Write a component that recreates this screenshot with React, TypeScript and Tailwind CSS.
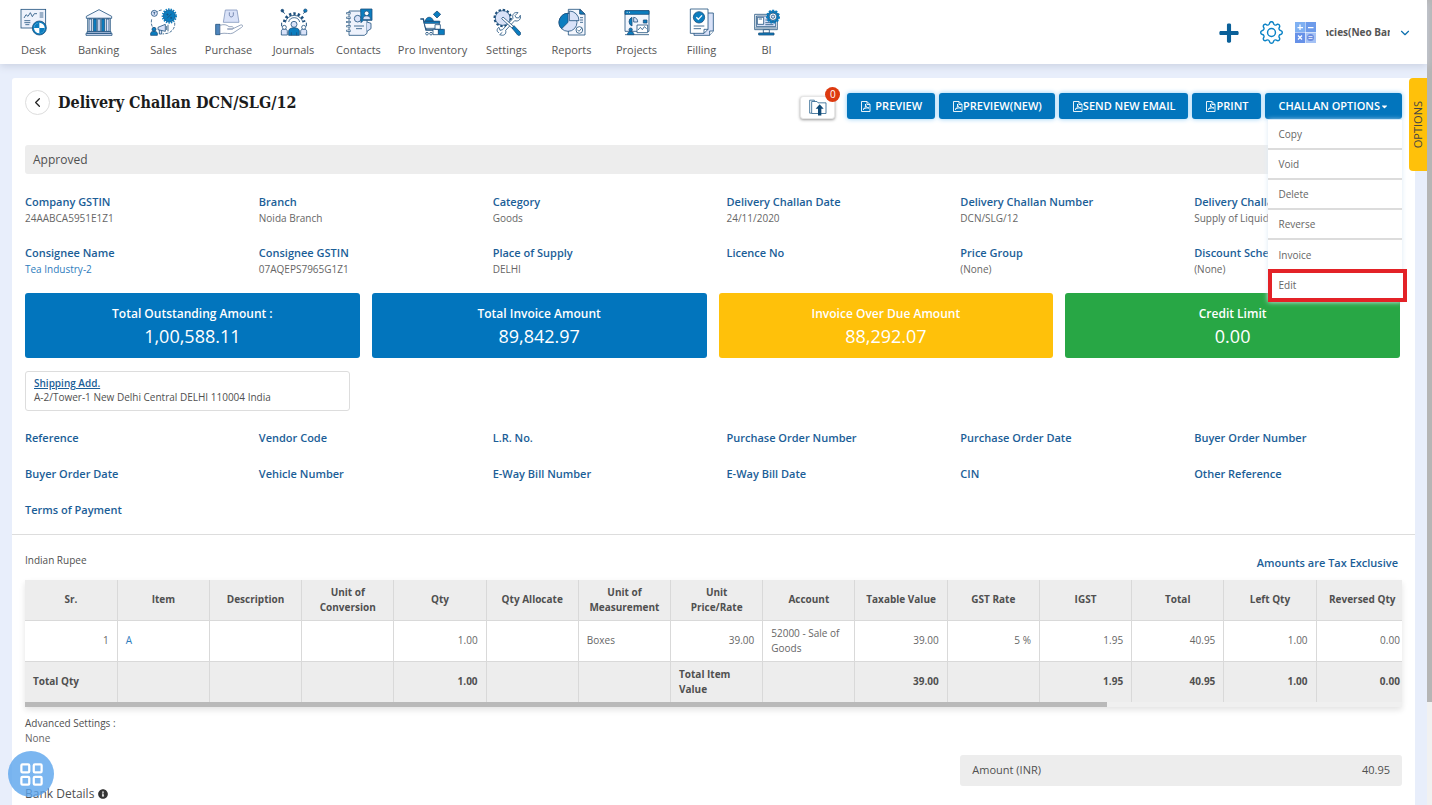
import React from "react";
import { ChevronDown, ChevronLeft, LayoutGrid } from "lucide-react";
import { BsGear } from "react-icons/bs";
import { FaCaretDown, FaInfoCircle, FaPlus } from "react-icons/fa";

const NAVY = "#1d4f7c";
const BLUE = "#0b7dbf";
const PALE = "#d9e2f8";

type NavItem = {
	label: string;
	icon: React.ReactNode;
	wide?: boolean;
};

type Field = {
	label: string;
	value?: string;
	link?: boolean;
};

const navItems: NavItem[] = [
	{
		label: "Desk",
		icon: (
			<>
				<rect x="3" y="4" width="74" height="56" fill="#eef2fc" />
				<path d="M12 30l6-10 6 5 7-11 6 12 6-9h8M59 15h11M59 21h11M59 27h11M13 38h18M13 44h18M16 50h12" fill="none" />
				<circle cx="58" cy="60" r="21" fill={BLUE} />
				<circle cx="58" cy="60" r="16" fill="#fff" stroke="none" />
				<path d="M58 60V44a16 16 0 0 0-16 16zM58 60v16a16 16 0 0 0 16-16z" fill={BLUE} stroke="none" />
			</>
		),
	},
	{
		label: "Banking",
		icon: (
			<>
				<path d="M4 25L42 5l38 20v6H4z" fill="#f3f6fd" />
				<path d="M8 31h68v40H8z" fill="#fff" />
				<path d="M12 33h8v37h-8zM64 33h8v37h-8z" fill={PALE} />
				<path d="M25 33h9v37h-9zM50 33h9v37h-9z" fill={BLUE} />
				<path d="M38 33h8v37h-8z" fill={PALE} />
				<path d="M6 71h72v5H6zM3 76h78v6H3z" fill={PALE} />
			</>
		),
	},
	{
		label: "Sales",
		icon: (
			<>
				<path d="M35 6c-8 1-12 4-16 8M74 44c2 14-7 28-22 32l-14 2M5 34c-2 9-1 16 2 22" fill="none" strokeDasharray="9 4" />
				<circle cx="13" cy="16" r="9" fill={PALE} />
				<path d="M10 13h6M13 13v7" fill="none" />
				<circle cx="58" cy="24" r="18" fill={BLUE} />
				<circle cx="58" cy="24" r="20" fill="none" stroke={BLUE} strokeWidth="6" strokeDasharray="4 3.5" />
				<path d="M51 31l14-14M51 18h3v3h-3zM62 28h3v3h-3z" fill="none" />
				<circle cx="12" cy="64" r="6" fill={BLUE} />
				<path d="M2 82V76c0-8 20-8 20 0v6z" fill={BLUE} />
				<path d="M24 58l22-9v21l-22-5zM28 66v12h7V68M50 54v12M54 50v20" fill={PALE} />
			</>
		),
	},
	{
		label: "Purchase",
		icon: (
			<>
				<path d="M31 6h35l6 37H25z" fill={PALE} stroke="#8195bd" />
				<path d="M43 13v7c0 9 12 9 12 0v-7" fill="none" stroke="#5b6f9c" />
				<path d="M2 49h13v31H2z" fill="#4f86bd" />
				<path d="M15 52c12-4 20-2 27 4h9c6 1 5 7 0 7H37h15l25-12c7-2 8 4 3 7L54 75c-8 5-22-2-39 2z" fill="#fff" stroke="#7e91ae" />
			</>
		),
	},
	{
		label: "Journals",
		icon: (
			<>
				<path d="M13 42a30 30 0 0 1 59 0" fill="none" strokeWidth="9" strokeDasharray="7 6" />
				<path d="M16 44a27 27 0 0 1 53 0" fill="#fff" />
				<path d="M26 42a17 17 0 0 1 33 0" fill="none" />
				<path d="M14 17l-7-8M70 17l6-7M5 55V44M79 55V44" fill="none" strokeWidth="3" />
				<circle cx="7" cy="8" r="4" fill={NAVY} />
				<circle cx="76" cy="8" r="5" fill={BLUE} />
				<path d="M4 81V70c0-10 18-10 18 0v11zM62 81V70c0-10 18-10 18 0v11z" fill={PALE} />
				<circle cx="13" cy="58" r="6" fill="#fff" />
				<circle cx="71" cy="58" r="6" fill="#fff" />
				<path d="M26 82V69c0-13 32-13 32 0v13z" fill={BLUE} />
				<circle cx="42" cy="49" r="9" fill={PALE} />
				<path d="M34 82V73M50 82V73" fill="none" />
			</>
		),
	},
	{
		label: "Contacts",
		icon: (
			<>
				<path d="M12 9h54v67l-8 6H12z" fill="#eef2fc" />
				<path d="M66 42l12 4v16l-12 8" fill={PALE} />
				<path d="M4 16h13M4 29h13M4 42h13M4 55h13M4 68h13" fill="none" strokeWidth="6" />
				<path d="M6 16h10M6 29h10M6 42h10M6 55h10M6 68h10" fill="none" stroke="#fff" />
				<circle cx="38" cy="32" r="10" fill={PALE} />
				<path d="M27 54h30M33 62h18" fill="none" />
				<path d="M47 3h34v34H55l-7 7z" fill={BLUE} />
				<circle cx="65" cy="16" r="7" fill="#fff" />
				<path d="M54 35v-4c0-10 22-10 22 0v4z" fill={PALE} />
			</>
		),
	},
	{
		label: "Pro Inventory",
		wide: true,
		icon: (
			<>
				<path d="M4 33h9l8 33h51" fill="none" strokeWidth="4" />
				<path d="M14 40h49l-6 21H20z" fill="#fff" />
				<path d="M16 40h45v6H17zM19 39c2-14 20-16 24 0z" fill={BLUE} />
				<path d="M54 9l11 10-11 11-11-11z" fill={BLUE} />
				<path d="M48 50h16v14H48zM42 64h16v16H42z" fill="#fff" />
				<path d="M59 64h17v16H59z" fill={BLUE} />
				<circle cx="24" cy="77" r="4" fill="#fff" />
				<circle cx="36" cy="77" r="4" fill="#fff" />
			</>
		),
	},
	{
		label: "Settings",
		icon: (
			<>
				<circle cx="29" cy="30" r="24" fill="none" strokeWidth="7" strokeDasharray="7 5.5" />
				<circle cx="29" cy="30" r="22" fill={PALE} />
				<path d="M18 74c-8-2-7-13 0-16l3 9 8-2 31-34c-4-12 5-20 15-17l-9 9 3 6 8 1 5-8c3 12-6 20-17 16L38 67c3 12-6 18-18 13l8-7" fill="#fff" />
				<path d="M30 27l-4 5 34 31 5-5z" fill="#fff" />
				<path d="M57 60l6-7 19 20c4 6-3 12-8 8z" fill={BLUE} />
			</>
		),
	},
	{
		label: "Reports",
		icon: (
			<>
				<path d="M31 4h36l14 14v63H31z" fill="#f3f6fd" />
				<path d="M67 4v14h14M66 29h9M66 36h9M66 43h9" fill="none" />
				<path d="M65 5l15 13H65z" fill={BLUE} />
				<circle cx="30" cy="43" r="27" fill={PALE} />
				<path d="M30 43V16A27 27 0 0 0 11 62z" fill={BLUE} />
				<path d="M34 38V9a29 29 0 0 1 29 29z" fill={PALE} />
				<circle cx="64" cy="66" r="10" fill="#fff" />
				<path d="M58 65l5 5 8-9" fill="none" />
			</>
		),
	},
	{
		label: "Projects",
		icon: (
			<>
				<path d="M6 8h72v62H6z" fill="#f3f6fd" />
				<path d="M6 8h72v11H6z" fill={BLUE} />
				<path d="M11 13h3M18 13h3" fill="none" stroke="#fff" />
				<path d="M27 28v26a14 14 0 0 1 0-26z" fill={BLUE} />
				<path d="M32 28a14 14 0 0 1 12 14H32z" fill={PALE} />
				<path d="M61 36h11v9H61z" fill={BLUE} />
				<path d="M42 51h32v23H42z" fill="#fff" />
				<path d="M45 66l7-8 6 7 6-9 7 6M6 80h72" fill="none" />
				<circle cx="23" cy="65" r="5" fill={BLUE} />
				<path d="M13 80c1-13 19-13 20 0z" fill={BLUE} />
			</>
		),
	},
	{
		label: "Filling",
		icon: (
			<>
				<path d="M18 15h58v54L65 82H18z" fill={PALE} />
				<path d="M76 69H65v13" fill="#fff" />
				<path d="M7 3h53v61L48 76H7z" fill="#fff" />
				<path d="M60 64H48v12M17 54h32M17 62h22" fill="none" />
				<circle cx="33" cy="28" r="17" fill={BLUE} />
				<path d="M25 28l6 6 11-12" fill="none" stroke="#fff" strokeWidth="4" />
			</>
		),
	},
	{
		label: "BI",
		icon: (
			<>
				<path d="M5 19h68v46H5z" fill="#fff" />
				<path d="M10 24h58v32H10z" fill={PALE} />
				<path d="M13 28h19v21H13zM17 33h10M37 36h9M37 44h24M37 50h24M7 60h64" fill="#fff" />
				<path d="M31 65h18v10H31z" fill="#fff" />
				<path d="M17 75h46v6H17z" fill={BLUE} />
				<circle cx="60" cy="26" r="17" fill={BLUE} />
				<circle cx="60" cy="26" r="18" fill="none" stroke={BLUE} strokeWidth="6" strokeDasharray="6 4" />
				<circle cx="60" cy="26" r="11" fill="#fff" />
				<circle cx="60" cy="26" r="5" fill={PALE} />
			</>
		),
	},
];

const details: Field[] = [
	{ label: "Company GSTIN", value: "24AABCA5951E1Z1" },
	{ label: "Branch", value: "Noida Branch" },
	{ label: "Category", value: "Goods" },
	{ label: "Delivery Challan Date", value: "24/11/2020" },
	{ label: "Delivery Challan Number", value: "DCN/SLG/12" },
	{ label: "Delivery Challan Type", value: "Supply of Liquid Gas" },
	{ label: "Consignee Name", value: "Tea Industry-2", link: true },
	{ label: "Consignee GSTIN", value: "07AQEPS7965G1Z1" },
	{ label: "Place of Supply", value: "DELHI" },
	{ label: "Licence No" },
	{ label: "Price Group", value: "(None)" },
	{ label: "Discount Scheme", value: "(None)" },
];

const references = [
	"Reference",
	"Vendor Code",
	"L.R. No.",
	"Purchase Order Number",
	"Purchase Order Date",
	"Buyer Order Number",
	"Buyer Order Date",
	"Vehicle Number",
	"E-Way Bill Number",
	"E-Way Bill Date",
	"CIN",
	"Other Reference",
	"Terms of Payment",
];

const totals = [
	{ label: "Total Outstanding Amount :", value: "1,00,588.11", color: "bg-[#0275bd]" },
	{ label: "Total Invoice Amount", value: "89,842.97", color: "bg-[#0275bd]" },
	{ label: "Invoice Over Due Amount", value: "88,292.07", color: "bg-[#ffc10a]" },
	{ label: "Credit Limit", value: "0.00", color: "bg-[#28a745]" },
];

const columns = [
	{ head: "Sr.", cell: "1", total: "Total Qty" },
	{ head: "Item", cell: "A", total: "" },
	{ head: "Description", cell: "", total: "" },
	{ head: "Unit of Conversion", cell: "", total: "" },
	{ head: "Qty", cell: "1.00", total: "1.00" },
	{ head: "Qty Allocate", cell: "", total: "" },
	{ head: "Unit of Measurement", cell: "Boxes", total: "" },
	{ head: "Unit Price/Rate", cell: "39.00", total: "Total Item Value" },
	{ head: "Account", cell: "52000 - Sale of Goods", total: "" },
	{ head: "Taxable Value", cell: "39.00", total: "39.00" },
	{ head: "GST Rate", cell: "5 %", total: "" },
	{ head: "IGST", cell: "1.95", total: "1.95" },
	{ head: "Total", cell: "40.95", total: "40.95" },
	{ head: "Left Qty", cell: "1.00", total: "1.00" },
	{ head: "Reversed Qty", cell: "0.00", total: "0.00" },
];

const menuItems = ["Copy", "Void", "Delete", "Reverse", "Invoice"];

// numbers and percentages go to the right, everything else to the left
const isNumeric = (text: string) => /^[\d.]+( %)?$/.test(text);

function PdfIcon() {
	return (
		<svg viewBox="0 0 20 22" className="h-[11px] w-[11px]" fill="none" stroke="currentColor" strokeWidth="1.8">
			<path d="M2 1h11l6 6v14H2zM13 1v6h6" />
			<path d="M5 17c4-2 6-6 5-11M10 6c0 5 3 8 7 8-4-1-8 0-12 3" />
		</svg>
	);
}

function ActionButton({ children }: { children: React.ReactNode }) {
	return (
		<button className="flex h-[26px] items-center whitespace-nowrap rounded-[3px] bg-[#0275bd] px-[13px] text-[11px] font-semibold text-white shadow-[0_0_5px_#8fcbf5]">
			{children}
		</button>
	);
}

function TopNav() {
	return (
		<header className="relative z-10 flex h-16 shrink-0 items-center justify-between bg-white pr-[15px] shadow-[0_2px_8px_#c9d0e0]">
			<nav className="flex h-full pl-px">
				{navItems.map((item) => (
					<a
						key={item.label}
						href="#"
						className={`flex flex-col items-center gap-[6px] whitespace-nowrap pt-[8px] text-[11px] leading-4 text-[#555] ${item.wide ? "w-[83px]" : "w-[65px]"}`}
					>
						<svg viewBox="0 0 84 84" className="size-7" stroke={NAVY} strokeWidth="2.4">
							{item.icon}
						</svg>
						{item.label}
					</a>
				))}
			</nav>
			<div className="flex items-center pt-px">
				<button aria-label="Add" className="mr-5 text-[#0a6099]">
					<FaPlus size={22} />
				</button>
				<button aria-label="Settings" className="mr-3 text-[#0b83c6]">
					<BsGear size={23} />
				</button>
				<button aria-label="Calculator" className="mr-2.5">
					<svg viewBox="0 0 42 42" className="size-[21px]" stroke="#fff" strokeWidth="2.5" fill="none">
						<path d="M0 0h20v20H0z" fill="#7fb0f2" stroke="none" />
						<path d="M21 0h21v20H21z" fill="#6d9bea" stroke="none" />
						<path d="M0 21h20v21H0z" fill="#6691e8" stroke="none" />
						<path d="M21 21h21v21H21z" fill="#a5c2f5" stroke="none" />
						<path d="M10 5v11M5 11h11M26 11h11M6 27l8 8M14 27l-8 8" />
						<circle cx="31" cy="31" r="7" fill="#6d8ee0" stroke="none" />
						<path d="M27 29h8M27 33h8" strokeWidth="1.5" />
					</svg>
				</button>
				<div className="flex w-16 justify-center overflow-hidden whitespace-nowrap text-[10px] font-bold text-[#555]">
					<span>ncies(Neo Ban</span>
				</div>
				<button aria-label="Account" className="ml-2 text-[#0b6fae]">
					<ChevronDown size={14} />
				</button>
			</div>
		</header>
	);
}

function ChallanMenu() {
	return (
		<div className="relative">
			<ActionButton>
				CHALLAN OPTIONS
				<FaCaretDown size={9} />
			</ActionButton>
			<ul className="absolute left-[3px] right-0 top-[27px] z-20 bg-white text-[10px] text-[#666] shadow-[0_0_5px_#dbe9f5]">
				{menuItems.map((item) => (
					<li key={item} className={`h-[30px] ${item === "Invoice" ? "" : "border-b-2 border-[#dcdcdc]"}`}>
						<button className="h-full w-full px-2.5 text-left">{item}</button>
					</li>
				))}
				<li className="-mr-[5px] -mt-px">
					<button className="block h-[33px] w-full border-4 border-[#e32227] bg-white px-1.5 text-left">Edit</button>
				</li>
			</ul>
		</div>
	);
}

function TitleBar() {
	return (
		<div className="flex items-start justify-between px-[13px]">
			<div className="flex items-center gap-2 pt-3">
				<button aria-label="Back" className="flex size-[25px] items-center justify-center rounded-full border border-[#ddd] text-[#222]">
					<ChevronLeft size={15} />
				</button>
				<h1 className="font-['DejaVu_Serif_Condensed','DejaVu_Serif',serif] text-base leading-6 font-bold text-[#1c1c1c]">
					Delivery Challan DCN/SLG/12
				</h1>
			</div>
			<div className="flex gap-1 pt-[15px]">
				<button aria-label="Upload" className="relative mr-2 mt-[3px] flex h-[23px] w-[35px] items-center justify-center rounded-[3px] border border-[#e6e6e6] bg-white shadow-[0_1px_3px_#999]">
					<svg viewBox="0 0 54 50" className="h-[17px] w-[18px]" fill="none" stroke="#2f6690" strokeWidth="2.5">
						<path d="M8 42H2V3h14v4M8 7h16l3 4h24v32H8z" />
						<path d="M32 15l12 14h-7v20H27V29h-7z" fill="#0f4a77" stroke="none" />
					</svg>
					<span className="absolute -right-1.5 -top-2.5 flex size-[15px] items-center justify-center rounded-full bg-[#dd3a10] text-[10px] text-white">
						0
					</span>
				</button>
				<ActionButton>
					<PdfIcon />
					<span className="ml-1">PREVIEW</span>
				</ActionButton>
				<ActionButton>
					<PdfIcon />
					PREVIEW(NEW)
				</ActionButton>
				<ActionButton>
					<PdfIcon />
					SEND NEW EMAIL
				</ActionButton>
				<ActionButton>
					<PdfIcon />
					PRINT
				</ActionButton>
				<ChallanMenu />
			</div>
		</div>
	);
}

function ItemsTable() {
	return (
		<div className="mx-[13px] overflow-hidden shadow-[0_3px_6px_#e4e4e4]">
			<table className="w-[100.5%] table-fixed border-collapse text-[10px] leading-[15px]">
				<thead>
					<tr className="h-10 bg-[#ededed]">
						{columns.map((col) => (
							<th key={col.head} className="border-b border-r border-[#d9d9d9] px-2 font-bold">
								{col.head}
							</th>
						))}
					</tr>
				</thead>
				<tbody>
					<tr className="h-[41px] text-[#666]">
						{columns.map((col) => (
							<td
								key={col.head}
								className={`border-b border-r border-[#d9d9d9] px-2 ${isNumeric(col.cell) ? "text-right" : ""}`}
							>
								{col.head === "Item" ? (
									<a href="#" className="text-[#2f7dbd]">
										{col.cell}
									</a>
								) : (
									col.cell
								)}
							</td>
						))}
					</tr>
				</tbody>
				<tfoot>
					<tr className="h-[41px] bg-[#ededed] font-bold">
						{columns.map((col) => (
							<td
								key={col.head}
								className={`border-r border-[#d9d9d9] px-2 ${isNumeric(col.total) ? "text-right" : ""}`}
							>
								{col.total}
							</td>
						))}
					</tr>
				</tfoot>
			</table>
			<div className="h-[5px] bg-[#f0f0f0]">
				<div className="h-full w-[78.6%] bg-[#b9b9b9]" />
			</div>
		</div>
	);
}

export default function App() {
	return (
		<div className="flex h-screen overflow-hidden bg-[#e8eefb] font-['Open_Sans','Noto_Sans',sans-serif] text-[#505050]">
			<div className="flex min-w-0 flex-1 flex-col">
				<TopNav />
				<div className="relative flex-1 pl-3 pr-3 pt-3.5">
					<main className="h-full rounded-t-[3px] bg-white">
						<TitleBar />
						<div className="mx-[13px] mt-[26px] h-[29px] rounded-[3px] bg-[#ededed] px-2 text-xs font-medium leading-[29px]">
							Approved
						</div>
						<div className="mt-5 grid grid-cols-6 gap-y-[19px]">
							{details.map((field) => (
								<div key={field.label} className="h-8 whitespace-nowrap pl-[13px] leading-4">
									<div className="text-[11px] font-semibold text-[#1b5e97]">{field.label}</div>
									{field.link ? (
										<a href="#" className="block text-[10px] text-[#2f7dbd]">
											{field.value}
										</a>
									) : (
										<div className="text-[10px] text-[#666]">{field.value}</div>
									)}
								</div>
							))}
						</div>
						<div className="ml-[13px] mr-[15px] mt-4 grid grid-cols-4 gap-3">
							{totals.map((card) => (
								<div key={card.label} className={`flex h-[65px] flex-col items-center rounded-[3px] pt-[13px] text-white ${card.color}`}>
									<div className="text-xs font-semibold leading-4">{card.label}</div>
									<div className="text-lg leading-7">{card.value}</div>
								</div>
							))}
						</div>
						<div className="mx-[13px] mt-[13px] h-10 w-[325px] rounded-[3px] border border-[#ddd] px-2 pt-1">
							<a href="#" className="block text-[10px] font-semibold leading-[14px] text-[#1b5e97] underline">
								Shipping Add.
							</a>
							<div className="text-[10px] leading-[14px]">A-2/Tower-1 New Delhi Central DELHI 110004 India</div>
						</div>
						<div className="mt-[19px] grid grid-cols-6 gap-y-5 border-b border-[#ddd] pb-4">
							{references.map((label) => (
								<div key={label} className="whitespace-nowrap pl-[13px] text-[11px] font-semibold leading-4 text-[#1b5e97]">
									{label}
								</div>
							))}
						</div>
						<div className="flex h-[45px] justify-between pl-[13px] pr-[17px] pt-[17px] leading-4">
							<div className="text-[10px] font-medium">Indian Rupee</div>
							<div className="pt-[3px] text-[11px] font-semibold text-[#1b5e97]">Amounts are Tax Exclusive</div>
						</div>
						<ItemsTable />
						<div className="grid grid-cols-6 pt-[9px]">
							<div className="col-span-4 pl-[13px] text-[10px] leading-[15px]">
								<div className="font-medium">Advanced Settings :</div>
								<div className="text-[#666]">None</div>
								<div className="mt-10 flex items-center gap-1 text-xs font-medium leading-4">
									Bank Details <FaInfoCircle size={10} className="text-[#333]" />
								</div>
							</div>
							<div className="col-span-2 mx-[13px] mt-[39px] flex h-[31px] items-center justify-between rounded-[3px] bg-[#ededed] px-3 text-[11px] font-medium">
								<span>Amount (INR)</span>
								<span>40.95</span>
							</div>
						</div>
					</main>
					<button className="absolute right-0 top-3.5 h-[93px] w-[18px] rounded-l-[4px] bg-[#ffc10a] text-[11px] leading-[18px] text-[#444]">
						<span className="block rotate-180 text-center [writing-mode:vertical-rl]">OPTIONS</span>
					</button>
				</div>
			</div>
			<div className="w-[5px] bg-[#f1f1f1]">
				<div className="h-[87.2%] bg-[#b5b5b5]" />
			</div>
			<button aria-label="Apps" className="fixed bottom-2 left-2 flex size-[46px] items-center justify-center rounded-full bg-[#5aa4ec]/80 text-white">
				<LayoutGrid size={27} strokeWidth={2} />
			</button>
		</div>
	);
}
